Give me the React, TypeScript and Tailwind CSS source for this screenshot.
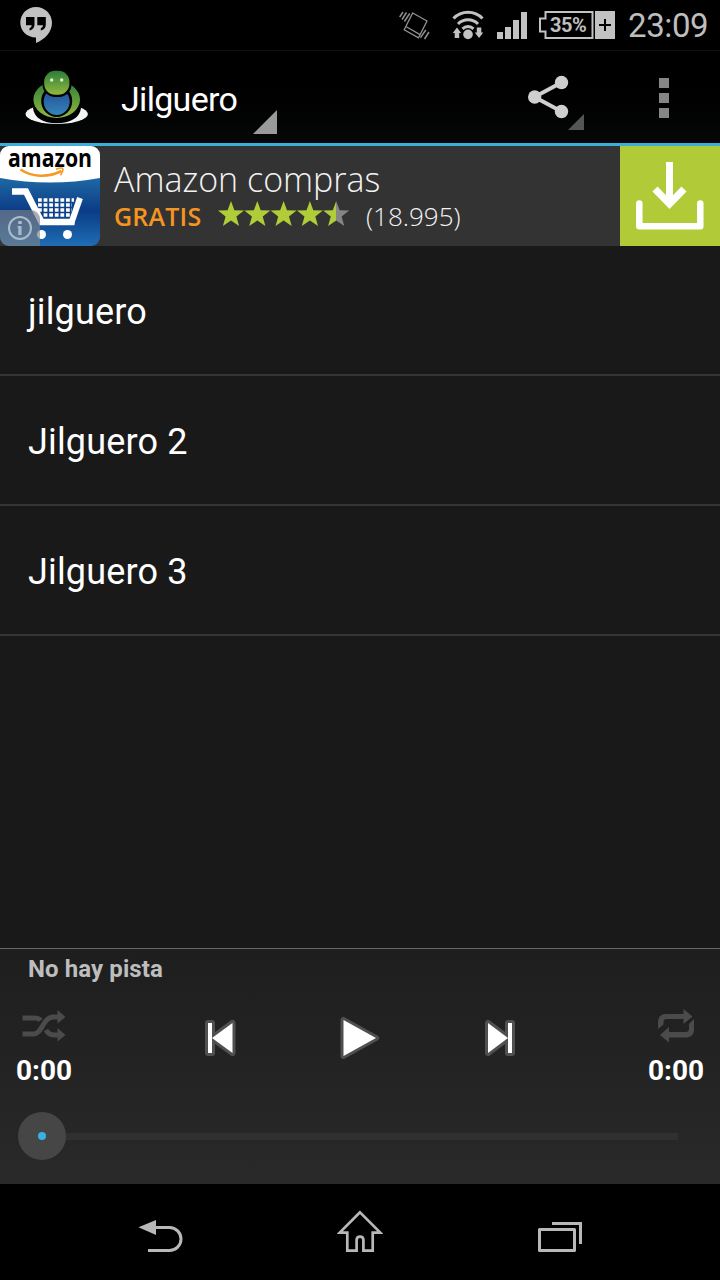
import { useState } from "react";

const TRACKS = ["jilguero", "Jilguero 2", "Jilguero 3"];

const STAR = "M13 0l3.4 9.2 9.6.4-7.6 6 2.7 9.4-8.1-5.4L4.9 25l2.7-9.4L0 9.600l9.600-.4z";

function StatusBar() {
  return (
    <div className="h-[50px] shrink-0 bg-black flex items-center justify-between pl-5 pr-3 text-[#bebebe]">
      <svg className="w-8 h-9" viewBox="20 7 32 36">
        <path fill="#c2c2c2" d="M36 7c8.800 0 16 7 16 15.800C52 32 45 39.500 36 43v-5.400c-9-.1-15.700-6.500-15.700-15C20.300 14 27.200 7 36 7z" />
        <path d="M26 17h8.500v7.500c0 3.500-2 5.300-5 5.900v-2.100c1.300-.6 2.200-1.500 2.200-3H26zM37.300 17h8.500v7.500c0 3.500-2 5.300-5 5.900v-2.100c1.300-.6 2.200-1.500 2.200-3h-5.700z" />
      </svg>

      <div className="flex items-center h-full">
        <svg className="w-[32px] h-[50px]" viewBox="399 0 32 50" fill="none" stroke="#909090">
          <path strokeWidth="1.300" d="M412.700 13L427 21l-8.500 16.800-14.300-8zM406.300 26.800l13.800 7.800M404.200 29.800l14.300 8" />
          <path strokeWidth="1.500" d="M403 12l-3.300 5M406.500 12.500l-4.500 7M409.700 13.500l-5.300 8M429 32l-4.500 7M425.800 30l-5.300 7.600" />
        </svg>
        <svg className="ml-[20px] w-[34px] h-[50px]" viewBox="451 0 34 50">
          <g fill="none" stroke="#c2c2c2" strokeWidth="3">
            <path d="M453.500 18.500a20 20 0 0 1 29 0M458 24a14 14 0 0 1 20 0M462.500 28.800a8 8 0 0 1 11 0" />
          </g>
          <circle cx="468" cy="34.400" r="4.800" fill="#c2c2c2" />
          <path fill="#c2c2c2" d="M457 27.500l4.200 5.500h-2v5h-4.500v-5h-2zM479 38l-4.200-5.500h2v-5h4.500v5h2z" />
        </svg>
        <svg className="ml-3 w-[30px] h-[50px]" viewBox="497 0 30 50" fill="#c2c2c2">
          <path d="M497 32h6v7h-6zM505 27h6v12h-6zM513 20h6v19h-6zM521 12h6v27h-6z" />
        </svg>
        <div className="relative ml-3 w-[76px] h-[28px] flex">
          <svg className="absolute inset-0 w-[76px] h-[28px]" viewBox="539 11 76 28">
            <path fill="none" stroke="#c2c2c2" strokeWidth="2" d="M545.500 12h47v26h-47v-6.500h-5.500v-13h5.500z" />
            <path fill="#c2c2c2" d="M595 11h20v28h-20z" />
            <path stroke="#000" strokeWidth="2" d="M599 25h12M605 19v12" />
          </svg>
          <span className="relative ml-[11px] text-[20px] leading-[28px] font-bold tracking-[-0.5px]">35%</span>
        </div>
        <span className="ml-[13px] w-[80px] text-[33px] leading-[50px] tracking-[-0.4px] whitespace-nowrap pt-[2px]">23:09</span>
      </div>
    </div>
  );
}

function BirdLogo() {
  return (
    <svg className="w-[64px] h-[56px]" viewBox="25 69 64 56">
      <defs>
        <linearGradient id="head" x1="0" y1="0" x2="0" y2="1">
          <stop offset="0" stopColor="#2c7c38" />
          <stop offset="1" stopColor="#91b93e" />
        </linearGradient>
        <linearGradient id="belly" x1="0" y1="0" x2="0" y2="1">
          <stop offset="0" stopColor="#234d91" />
          <stop offset="1" stopColor="#3384ba" />
        </linearGradient>
      </defs>
      <ellipse cx="56.700" cy="114" rx="31.200" ry="10" fill="#f4f4f4" />
      <path d="M33 108c1 10 10 15 23.700 15.200C70 123 80 118 81 108L72 90H42z" />
      <ellipse cx="56.700" cy="99.500" rx="23.300" ry="18.500" fill="url(#head)" />
      <ellipse cx="56.700" cy="101" rx="15.500" ry="16" />
      <ellipse cx="56.700" cy="101.500" rx="13" ry="13.500" fill="url(#belly)" />
      <path d="M42 78h30v6H42z" />
      <rect x="42.500" y="69.500" width="29" height="27.500" rx="12.500" />
      <rect x="44.200" y="70.800" width="25.200" height="24" rx="11" fill="url(#head)" />
      <circle cx="51.700" cy="80" r="1.700" fill="#d5f5cf" />
      <circle cx="61.700" cy="80" r="1.700" fill="#d5f5cf" />
    </svg>
  );
}

function ActionBar() {
  return (
    <div className="h-[96px] shrink-0 border-t border-t-[#101010] border-b-[3px] border-b-[#3dadd9] bg-linear-to-b from-black to-[#060808] flex items-center pl-[25px]">
      <BirdLogo />
      <div className="ml-[32px] w-[156px] h-full flex">
        <h1 className="w-[132px] pt-px text-[34px] leading-[94px] tracking-[-0.700px] text-white whitespace-nowrap">Jilguero</h1>
        <svg className="self-end mb-[9px] w-6 h-6" viewBox="0 0 24 24">
          <path fill="#9a9a9a" d="M24 0v24H0z" />
        </svg>
      </div>
      <button className="ml-[250px] pt-[10px]" aria-label="Compartir">
        <svg className="w-[58px] h-[60px]" viewBox="527 72 58 60">
          <path fill="none" stroke="#cfcfcf" strokeWidth="4" d="M561.500 82.500L534.500 97l27 14.500" />
          <g fill="#cfcfcf">
            <circle cx="561.500" cy="82.500" r="6.700" />
            <circle cx="534.700" cy="97" r="6.700" />
            <circle cx="561.500" cy="111.500" r="6.700" />
          </g>
          <path fill="#555" d="M584 114v16h-16z" />
        </svg>
      </button>
      <button className="ml-[74px] pt-[2px] flex flex-col gap-[5px]" aria-label="Más opciones">
        <span className="size-[10px] bg-[#868686]" />
        <span className="size-[10px] bg-[#868686]" />
        <span className="size-[10px] bg-[#868686]" />
      </button>
    </div>
  );
}

function AmazonIcon() {
  return (
    <svg className="w-[100px] h-[100px] overflow-visible" viewBox="0 0 100 100">
      <defs>
        <linearGradient id="sea" x1="0" y1="0" x2="0" y2="1">
          <stop offset="0.350" stopColor="#1d64a2" />
          <stop offset="0.650" stopColor="#0b3c86" />
          <stop offset="1" stopColor="#1e6eb4" />
        </linearGradient>
        <clipPath id="round">
          <rect width="100" height="100" rx="9" />
        </clipPath>
      </defs>
      <g clipPath="url(#round)">
        <rect width="100" height="100" fill="url(#sea)" />
        <path fill="#fff" d="M0 0h100v32Q50 41 0 32z" />
        <path fill="none" stroke="#f59a22" strokeWidth="2.600" d="M20.500 23.500c11 7.500 27 8.500 41 1.500" />
        <path fill="none" stroke="#f59a22" strokeWidth="1.600" d="M56 23.200c5-2 7-1.200 7 0s-1 4-2.500 6" />
        <path fill="none" stroke="#fff" strokeWidth="6.500" d="M12 45.500h14l15.500 30.500h33" />
        <path fill="none" stroke="#fff" strokeWidth="6" d="M80 52l-9 26" />
        <g stroke="#fff" strokeWidth="3.400" strokeDasharray="3.800 1.800">
          <path d="M38 54h36M38 59h34M38 64h34M43.600 69h28" />
        </g>
        <circle cx="41.500" cy="88.500" r="4.500" fill="#fff" />
        <circle cx="67.500" cy="88.500" r="4.500" fill="#fff" />
        <path fill="#7b8187" fillOpacity="0.650" d="M0 64h31a9 9 0 0 1 9 9v27H0z" />
        <circle cx="20" cy="82" r="11" fill="none" stroke="#a9bccb" strokeWidth="2" />
        <path fill="#a9bccb" d="M18.200 75h3.600v3h-3.600zM17.500 80h4v9h-3.200v-7.500h-.8z" />
      </g>
      <text x="8" y="20.500" textLength="84" lengthAdjust="spacingAndGlyphs" fontFamily="Open Sans" fontWeight="700" fontSize="25">amazon</text>
    </svg>
  );
}

function AdBanner() {
  return (
    <div className="h-[100px] shrink-0 bg-[#333] flex font-['Open_Sans',sans-serif]">
      <AmazonIcon />
      <div className="ml-[14px] flex-1">
        <p className="h-[52px] pt-[10px] text-[34px] leading-[46px] font-light text-[#f2f2f2] whitespace-nowrap">Amazon compras</p>
        <div className="flex items-center h-[36px]">
          <span className="w-[104px] text-[25px] leading-[30px] font-semibold tracking-[0.2px] text-[#f5951f]">GRATIS</span>
          <svg className="-mt-[2px] w-[132px] h-[28px]" viewBox="0 0 132 28">
            <defs>
              <linearGradient id="half">
                <stop offset="0.500" stopColor="#b0cc38" />
                <stop offset="0.500" stopColor="#858585" />
              </linearGradient>
            </defs>
            {[0, 1, 2, 3, 4].map((i) => (
              <path key={i} d={STAR} transform={`translate(${i * 26.3} 0)`} fill={i < 4 ? "#b0cc38" : "url(#half)"} />
            ))}
          </svg>
          <span className="ml-4 text-[26px] leading-[30px] font-light text-[#f2f2f2]">(18.995)</span>
        </div>
      </div>
      <button className="w-[100px] h-[100px] bg-[#b0cb37]" aria-label="Descargar">
        <svg className="w-[100px] h-[100px]" viewBox="0 0 100 100" fill="none" stroke="#fff">
          <path strokeWidth="7" d="M49.500 16v42M35 43l14.500 15L64 43" />
          <path strokeWidth="6.500" strokeLinejoin="round" strokeLinecap="round" d="M19.300 57.500v22.700h61V57.500" />
        </svg>
      </button>
    </div>
  );
}

function Player() {
  const [playing, setPlaying] = useState(false);

  return (
    <div className="h-[236px] shrink-0 border-t border-[#686868] bg-linear-to-b from-[#1e1e1e] to-[#292929]">
      <p className="h-[40px] pl-7 text-[24px] leading-[40px] font-bold tracking-[0.1px] text-[#bdbdbd]">No hay pista</p>

      <div className="flex justify-between h-[100px] px-4">
        <div className="w-[57px] pt-[20px]">
          <svg className="ml-[6px] w-[44px] h-[34px]" viewBox="22 1009 44 34">
            <g fill="none" stroke="#4b4b4b" strokeWidth="5">
              <path d="M22.500 1018h13c2.500 0 4 1 5 2.500M22.500 1034h11c9 0 9-17 20-17h5M46 1030c2 3.500 5 5 8 5h4" />
            </g>
            <path fill="#4b4b4b" d="M57.500 1010l8 7-8 6.500zM57.500 1028l8 7-8 6.500z" />
          </svg>
          <p className="mt-[12px] text-[28px] leading-[32px] font-bold text-white">0:00</p>
        </div>

        <div className="flex items-center w-[312px] justify-between -mt-[2px] -ml-px">
          <button aria-label="Anterior">
            <svg className="w-[32px] h-[40px]" viewBox="204 1018 32 40">
              <path fill="none" stroke="#505050" strokeWidth="6" strokeLinejoin="round" d="M208 1023h4v30h-4zM232.500 1023v30L212 1038z" />
              <path fill="#fff" d="M208 1023h4v30h-4zM232.500 1023v30L212 1038z" />
            </svg>
          </button>
          <button aria-label="Reproducir" onClick={() => setPlaying(!playing)}>
            <svg className="w-[42px] h-[44px]" viewBox="339.500 1016 42 44">
              <path fill="none" stroke="#505050" strokeWidth="6" strokeLinejoin="round" d={playing ? "M345 1020h9v36h-9zM364 1020h9v36h-9z" : "M344 1020v36l32.500-18z"} />
              <path fill="#fff" d={playing ? "M345 1020h9v36h-9zM364 1020h9v36h-9z" : "M344 1020v36l32.500-18z"} />
            </svg>
          </button>
          <button aria-label="Siguiente">
            <svg className="w-[32px] h-[40px]" viewBox="484 1018 32 40">
              <path fill="none" stroke="#505050" strokeWidth="6" strokeLinejoin="round" d="M508 1023h4v30h-4zM488 1023v30l20-15z" />
              <path fill="#fff" d="M508 1023h4v30h-4zM488 1023v30l20-15z" />
            </svg>
          </button>
        </div>

        <div className="w-[56px] pt-[20px]">
          <svg className="ml-[9px] w-[38px] h-[34px]" viewBox="657 1009 38 34">
            <path fill="#4b4b4b" d="M658 1029v-7c0-5 3-8 8-8h17.500v-5l9 7.500-9 7.500v-5H667c-2.500 0-3.500 1-3.500 3.500v2zM694 1019v10.500c0 5-3 8-8 8h-17v5l-9-7.500 9-8v5h16.500c2.500 0 3.500-1 3.500-3.500v-4.500z" />
          </svg>
          <p className="mt-[12px] text-[28px] leading-[32px] font-bold text-white">0:00</p>
        </div>
      </div>

      <div className="mt-[23px] ml-[18px] w-[660px] h-[48px] flex items-center">
        <div className="size-12 shrink-0 rounded-full bg-[#464646] flex items-center justify-center">
          <span className="size-2 rounded-full bg-[#38b2e3]" />
        </div>
        <div className="flex-1 h-[7px] bg-[#303030]" />
      </div>
    </div>
  );
}

function NavBar() {
  return (
    <div className="h-[96px] shrink-0 bg-black flex items-center justify-between pl-[138px] pr-[137px]">
      <button aria-label="Atrás">
        <svg className="w-[45px] h-[96px]" viewBox="138 1184 45 96">
          <path fill="none" stroke="#b8b8b8" strokeWidth="3" d="M155 1227.500h14.500a11.500 11.500 0 0 1 0 23H148" />
          <path fill="#b8b8b8" d="M138.500 1227.300l17.500-7.300v15z" />
        </svg>
      </button>
      <button className="-ml-px" aria-label="Inicio">
        <svg className="w-[46px] h-[96px]" viewBox="337 1184 46 96" fill="none" stroke="#b8b8b8" strokeWidth="2.700">
          <path d="M360 1212.300l-20.300 20.300h7.600v18h9.300v-10.700c0-4.500 6.800-4.500 6.800 0v10.700h9.300v-18h7.600z" />
        </svg>
      </button>
      <button aria-label="Recientes">
        <svg className="w-[45px] h-[96px]" viewBox="538 1184 45 96" fill="none" stroke="#b8b8b8" strokeWidth="3">
          <path strokeLinejoin="round" d="M539.500 1229.500h35v21h-35z" />
          <path d="M552 1223.500h28.500v20.500" />
        </svg>
      </button>
    </div>
  );
}

export default function App() {
  return (
    <div className="w-[720px] h-[1280px] bg-[#191919] flex flex-col overflow-hidden font-[Roboto,sans-serif]">
      <StatusBar />
      <ActionBar />
      <AdBanner />
      <ul className="flex-1">
        {TRACKS.map((track) => (
          <li key={track} className="h-[130px] pt-px border-b-2 border-[#353535] pl-7 text-[36px] leading-[130px] tracking-[0.150px] text-white">
            {track}
          </li>
        ))}
      </ul>
      <Player />
      <NavBar />
    </div>
  );
}
